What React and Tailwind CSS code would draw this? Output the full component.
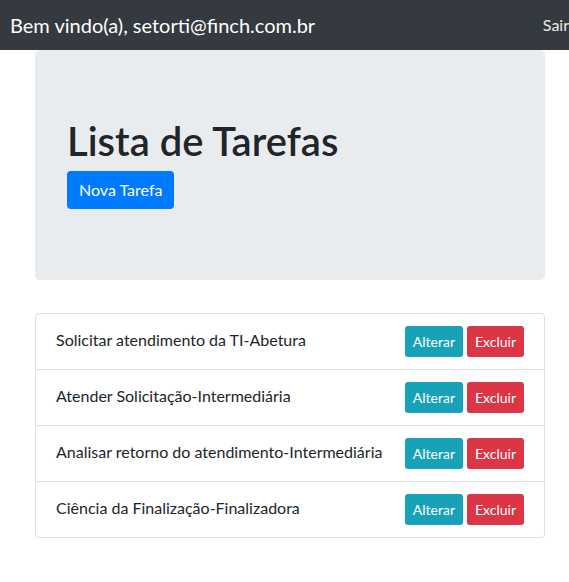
import React from 'react';

const tarefas = [
  'Solicitar atendimento da TI-Abetura',
  'Atender Solicitação-Intermediária',
  'Analisar retorno do atendimento-Intermediária',
  'Ciência da Finalização-Finalizadora',
];

const App = () => {
  return (
    <div className="w-full overflow-hidden bg-white min-h-[582px]" style={{ fontFamily: 'Lato, "Open Sans", sans-serif' }}>
      <div className="w-[580px]">
        <nav className="flex items-center justify-between h-[50px] bg-[#343a40] pl-[10px] pr-[11px]">
          <span className="text-[20px] text-white whitespace-nowrap">Bem vindo(a), setorti@finch.com.br</span>
          <a className="text-[16px] text-white/90">Sair</a>
        </nav>

        <div className="mx-auto w-[510px]">
          <div className="bg-[#e9ecef] rounded-[5px] px-[32px] pt-[67px] pb-[71px]">
            <h1 className="text-[40px] leading-[48px] font-semibold text-[#212529] mb-[6px]">Lista de Tarefas</h1>
            <button className="h-[38px] px-[12px] rounded-[4px] bg-[#007bff] text-white text-[16px]">Nova Tarefa</button>
          </div>

          <ul className="mt-[33px] border border-[#dfdfdf] rounded-[4px]">
            {tarefas.map((t, i) => (
              <li
                key={t}
                className={`flex items-center justify-between px-[20px] ${i > 0 ? 'border-t border-[#dfdfdf] h-[56px]' : 'h-[55px]'}`}
              >
                <span className="text-[16px] text-[#212529] whitespace-nowrap -mt-[4px]">{t}</span>
                <div className="flex gap-[4px]">
                  <button className="h-[31px] px-[8px] rounded-[3px] bg-[#17a2b8] text-white text-[14px]">Alterar</button>
                  <button className="h-[31px] px-[8px] rounded-[3px] bg-[#dc3545] text-white text-[14px]">Excluir</button>
                </div>
              </li>
            ))}
          </ul>
        </div>
      </div>
    </div>
  );
};

export default App;
